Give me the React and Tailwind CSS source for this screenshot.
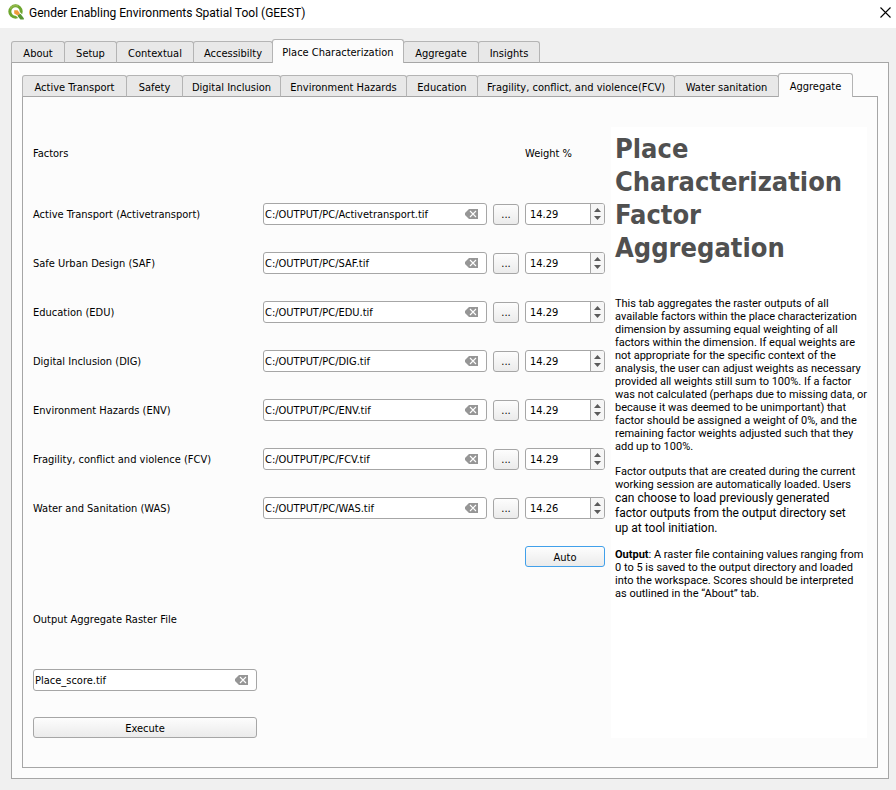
import { useState } from "react";

const mainTabs = [
  { name: "About", width: "w-[54px]" },
  { name: "Setup", width: "w-[53px]" },
  { name: "Contextual", width: "w-[78px]" },
  { name: "Accessibilty", width: "w-[80px]" },
  { name: "Place Characterization", width: "w-[132px]" },
  { name: "Aggregate", width: "w-[76px]" },
  { name: "Insights", width: "w-[62px]" },
];

const subTabs = [
  { name: "Active Transport", width: "w-[105px]" },
  { name: "Safety", width: "w-[57px]" },
  { name: "Digital Inclusion", width: "w-[99px]" },
  { name: "Environment Hazards", width: "w-[127px]" },
  { name: "Education", width: "w-[72px]" },
  { name: "Fragility, conflict, and violence(FCV)", width: "w-[198px]" },
  { name: "Water sanitation", width: "w-[105px]" },
  { name: "Aggregate", width: "w-[75px]" },
];

const factors = [
  { id: "at", label: "Active Transport (Activetransport)", file: "C:/OUTPUT/PC/Activetransport.tif", weight: "14.29" },
  { id: "saf", label: "Safe Urban Design (SAF)", file: "C:/OUTPUT/PC/SAF.tif", weight: "14.29" },
  { id: "edu", label: "Education (EDU)", file: "C:/OUTPUT/PC/EDU.tif", weight: "14.29" },
  { id: "dig", label: "Digital Inclusion (DIG)", file: "C:/OUTPUT/PC/DIG.tif", weight: "14.29" },
  { id: "env", label: "Environment Hazards (ENV)", file: "C:/OUTPUT/PC/ENV.tif", weight: "14.29" },
  { id: "fcv", label: "Fragility, conflict and violence (FCV)", file: "C:/OUTPUT/PC/FCV.tif", weight: "14.29" },
  { id: "was", label: "Water and Sanitation (WAS)", file: "C:/OUTPUT/PC/WAS.tif", weight: "14.26" },
];

function TabBar({ tabs, active, label }) {
  return (
    <div role="tablist" aria-label={label} className="relative z-10 -mb-px flex h-6 items-end">
      {tabs.map((tab) => {
        const selected = tab.name === active;
        return (
          <button
            key={tab.name}
            role="tab"
            aria-selected={selected}
            className={
              "-mr-px shrink-0 rounded-t-[3px] border border-[#b4b4b4] text-center leading-[14px] whitespace-nowrap last:mr-0 " +
              tab.width +
              (selected
                ? " relative z-10 h-6 border-b-0 bg-[#fcfcfc] pt-0.5"
                : " h-[22px] border-b-[#a6a6a6] bg-[#e8e8e8] pt-[3px]")
            }
          >
            {tab.name}
          </button>
        );
      })}
    </div>
  );
}

function FileField({ id, initial }) {
  const [value, setValue] = useState(initial);
  return (
    <div className="flex h-[22px] w-full items-center rounded-[3px] border border-[#a6a6a6] bg-white pr-2 pl-px">
      <input
        id={id}
        type="text"
        value={value}
        onChange={(e) => setValue(e.target.value)}
        className="min-w-0 flex-1 pt-0.5 leading-[14px] outline-none"
      />
      <button type="button" aria-label="Clear" onClick={() => setValue("")}>
        <svg width="13" height="10" viewBox="0 0 13 10" className="block">
          <path d="M4 0H13V10H4L0 6V4Z" fill="#969696" />
          <path d="M5 2L11 8M11 2L5 8" stroke="#fff" strokeWidth="1.1" />
        </svg>
      </button>
    </div>
  );
}

function WeightField({ label, initial }) {
  const [value, setValue] = useState(initial);
  const step = (d) => setValue((v) => (Number(v) + d).toFixed(2));
  return (
    <div className="flex h-[22px] w-full overflow-hidden rounded-[3px] border border-[#a6a6a6] bg-white">
      <input
        type="text"
        inputMode="decimal"
        aria-label={label}
        value={value}
        onChange={(e) => setValue(e.target.value)}
        className="min-w-0 flex-1 pt-0.5 pl-1 leading-[14px] outline-none"
      />
      <div className="flex w-[14px] flex-col items-center justify-center gap-1 border-l border-[#a6a6a6] bg-[#f6f6f6]">
        <button type="button" aria-label="Increase" onClick={() => step(1)}>
          <svg width="7" height="4" viewBox="0 0 7 4" className="block">
            <path d="M3.5 0L7 4H0Z" fill="#5a5a5a" />
          </svg>
        </button>
        <button type="button" aria-label="Decrease" onClick={() => step(-1)}>
          <svg width="7" height="4" viewBox="0 0 7 4" className="block">
            <path d="M0 0H7L3.5 4Z" fill="#5a5a5a" />
          </svg>
        </button>
      </div>
    </div>
  );
}

const pushButton =
  "h-[21px] w-full rounded-[3px] border bg-linear-to-b from-[#fdfdfd] to-[#ebebeb] pt-0.5 text-center leading-[14px]";
const rowGrid =
  "grid grid-cols-[minmax(0,1fr)_minmax(0,1fr)_26px_80px] items-center gap-x-[6px]";

export default function App() {
  return (
    <div className="flex min-h-screen flex-col bg-[#f0f0f0] font-['DejaVu_Sans_Condensed','DejaVu_Sans',sans-serif] text-[11px] text-black">
      <header className="flex h-7 items-center bg-white pr-[5px] pl-2">
        <svg width="16" height="16" viewBox="0 0 16 16" className="mb-1">
          <circle cx="7.5" cy="7.5" r="5.7" fill="none" stroke="#6da62e" strokeWidth="3" />
          <path d="M2.2 5A6 6 0 0 1 10.4 2.2" fill="none" stroke="#93b84a" strokeWidth="1.6" />
          <path d="M8 8L15 15" stroke="#fff" strokeWidth="5.4" />
          <path d="M10.4 10.2L12.6 10L15.8 14.2V15.4H12.4L9.6 12Z" fill="#589632" />
          <path d="M6.2 6.2H9.6L12 9.4L9.6 11.4L6.2 9.4Z" fill="#ee9a3a" />
        </svg>
        <h1 className="ml-[5px] flex-1 pb-[3px] font-[Roboto,sans-serif] text-[12px] leading-4">
          Gender Enabling Environments Spatial Tool (GEEST)
        </h1>
        <button aria-label="Close" className="mb-[3px]">
          <svg width="11" height="11" viewBox="0 0 11 11" className="block">
            <path d="M0.5 0.5L10.5 10.5M10.5 0.5L0.5 10.5" stroke="#000" strokeWidth="1.1" />
          </svg>
        </button>
      </header>

      <main className="flex flex-1 flex-col pt-[11px] pr-[7px] pb-[11px] pl-[11px]">
        <TabBar tabs={mainTabs} active="Place Characterization" label="Dimensions" />
        <section className="flex flex-1 flex-col border border-[#a6a6a6] bg-[#fcfcfc] p-[10px]">
          <TabBar tabs={subTabs} active="Aggregate" label="Factors" />
          <div className="flex flex-1 gap-[6px] border border-[#a6a6a6] px-[10px] pt-[30px] pb-[29px]">
            <form className="min-w-0 flex-1 leading-[14px]" onSubmit={(e) => e.preventDefault()}>
              <div className={rowGrid + " h-[63px] pb-[9px]"}>
                <span className="col-span-3">Factors</span>
                <span>Weight %</span>
              </div>
              {factors.map((f) => (
                <div key={f.id} className={rowGrid + " h-[49px] pb-px"}>
                  <label htmlFor={f.id} className="pt-0.5 whitespace-nowrap">{f.label}</label>
                  <FileField id={f.id} initial={f.file} />
                  <button type="button" aria-label={"Browse " + f.label} className={pushButton + " border-[#a6a6a6]"}>
                    ...
                  </button>
                  <WeightField label={"Weight " + f.label} initial={f.weight} />
                </div>
              ))}
              <div className={rowGrid + " h-[47px]"}>
                <button type="button" className={pushButton + " col-start-4 border-[#41a0ea]"}>
                  Auto
                </button>
              </div>
              <div className={rowGrid + " h-[78px]"}>
                <label htmlFor="output" className="pt-0.5">Output Aggregate Raster File</label>
              </div>
              <div className={rowGrid + " h-[44px]"}>
                <FileField id="output" initial="Place_score.tif" />
              </div>
              <div className={rowGrid + " pt-[15px]"}>
                <button type="submit" className={pushButton + " border-[#a6a6a6]"}>
                  Execute
                </button>
              </div>
            </form>

            <aside className="w-[256px] shrink-0 bg-white px-1 pt-[5px] font-[Roboto,sans-serif] leading-[13px] whitespace-nowrap">
              <h2 className="font-['DejaVu_Sans_Condensed','DejaVu_Sans',sans-serif] text-[27px] leading-[33px] font-bold text-[#505050]">
                Place
                <br />
                Characterization
                <br />
                Factor
                <br />
                Aggregation
              </h2>
              <p className="mt-[33px]">
                This tab aggregates the raster outputs of all
                <br />
                available factors within the place characterization
                <br />
                dimension by assuming equal weighting of all
                <br />
                factors within the dimension. If equal weights are
                <br />
                not appropriate for the specific context of the
                <br />
                analysis, the user can adjust weights as necessary
                <br />
                provided all weights still sum to 100%. If a factor
                <br />
                was not calculated (perhaps due to missing data, or
                <br />
                because it was deemed to be unimportant) that
                <br />
                factor should be assigned a weight of 0%, and the
                <br />
                remaining factor weights adjusted such that they
                <br />
                add up to 100%.
              </p>
              <p className="mt-3">
                Factor outputs that are created during the current
                <br />
                working session are automatically loaded. Users
              </p>
              <p className="text-[12px] leading-[15px]">
                can choose to load previously generated
                <br />
                factor outputs from the output directory set
                <br />
                up at tool initiation.
              </p>
              <p className="mt-3">
                <b>Output</b>: A raster file containing values ranging from
                <br />
                0 to 5 is saved to the output directory and loaded
                <br />
                into the workspace. Scores should be interpreted
                <br />
                as outlined in the “About” tab.
              </p>
            </aside>
          </div>
        </section>
      </main>
    </div>
  );
}
